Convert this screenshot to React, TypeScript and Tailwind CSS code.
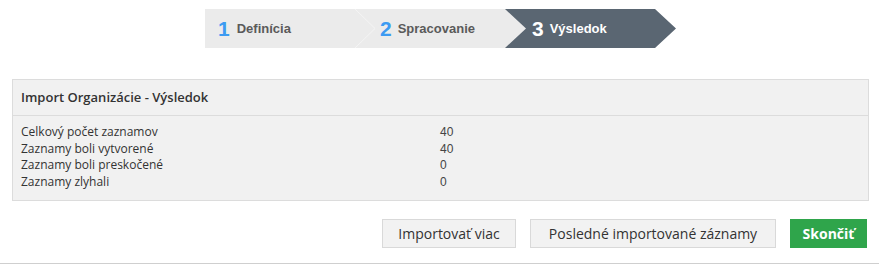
import React from 'react';

const rows = [
  { label: 'Celkový počet zaznamov', value: '40' },
  { label: 'Zaznamy boli vytvorené', value: '40' },
  { label: 'Zaznamy boli preskočené', value: '0' },
  { label: 'Zaznamy zlyhali', value: '0' },
];

export default function App() {
  return (
    <div className="w-[879px] h-[264px] bg-white font-['Open_Sans',sans-serif] text-[#333]">
      {/* wizard steps */}
      <div className="pt-[9px] pl-[205px] flex">
        <div className="relative flex h-[39px] font-['Liberation_Sans',Arial,sans-serif] font-bold">
          <div className="w-[150px] bg-[#ebebeb] flex items-center pl-[13px]">
            <span className="text-[21px] text-[#3d9bf2] mr-[7px]">1</span>
            <span className="text-[13px] text-[#5a5a5a]">Definícia</span>
          </div>
          <div className="w-[150px] bg-[#ebebeb] flex items-center pl-[25px]">
            <span className="text-[21px] text-[#3d9bf2] mr-[6px]">2</span>
            <span className="text-[13px] text-[#5a5a5a]">Spracovanie</span>
          </div>
          <div className="w-[171px] bg-[linear-gradient(90deg,#ebebeb_21px,transparent_21px)]">
            <div className="h-full bg-[#5a6672] [clip-path:polygon(0_0,150px_0,100%_50%,150px_100%,0_100%,21px_50%)] flex items-center pl-[27px]">
              <span className="text-[21px] text-white mr-[6px]">3</span>
              <span className="text-[13px] text-white">Výsledok</span>
            </div>
          </div>
          <svg className="absolute left-[150px] top-0" width="22" height="39" viewBox="0 0 22 39">
            <polyline points="0,0 20,19.5 0,39" fill="none" stroke="#f4f4f4" strokeWidth="1" />
          </svg>
        </div>
      </div>

      {/* result panel */}
      <div className="mt-[31px] ml-[12px] w-[857px] border border-[#dcdcdc] bg-[#f1f1f1]">
        <div className="h-[36px] border-b border-[#dcdcdc] flex items-center pl-[8px] text-[13px] font-semibold">
          Import Organizácie - Výsledok
        </div>
        <div className="pt-[8px] pb-[10px] pl-[8px] text-[12px] leading-[16.5px]">
          {rows.map((r) => (
            <div key={r.label} className="grid grid-cols-[419px_1fr]">
              <span>{r.label}</span>
              <span className="font-['Liberation_Sans',Arial,sans-serif] text-[#444]">{r.value}</span>
            </div>
          ))}
        </div>
      </div>

      {/* actions */}
      <div className="mt-[18px] pr-[12px] flex justify-end gap-[14px]">
        <button className="w-[134px] h-[29px] bg-[#f2f2f2] border border-[#d9d9d9] text-[14px] text-[#333]">
          Importovať viac
        </button>
        <button className="w-[246px] h-[29px] bg-[#f2f2f2] border border-[#d9d9d9] text-[14px] text-[#333]">
          Posledné importované záznamy
        </button>
        <button className="w-[77px] h-[29px] bg-[#2fa54b] border border-[#2fa54b] text-[14px] font-bold text-white">
          Skončiť
        </button>
      </div>
      <div className="mt-[15px] h-px bg-[#cfcfcf]" />
    </div>
  );
}
